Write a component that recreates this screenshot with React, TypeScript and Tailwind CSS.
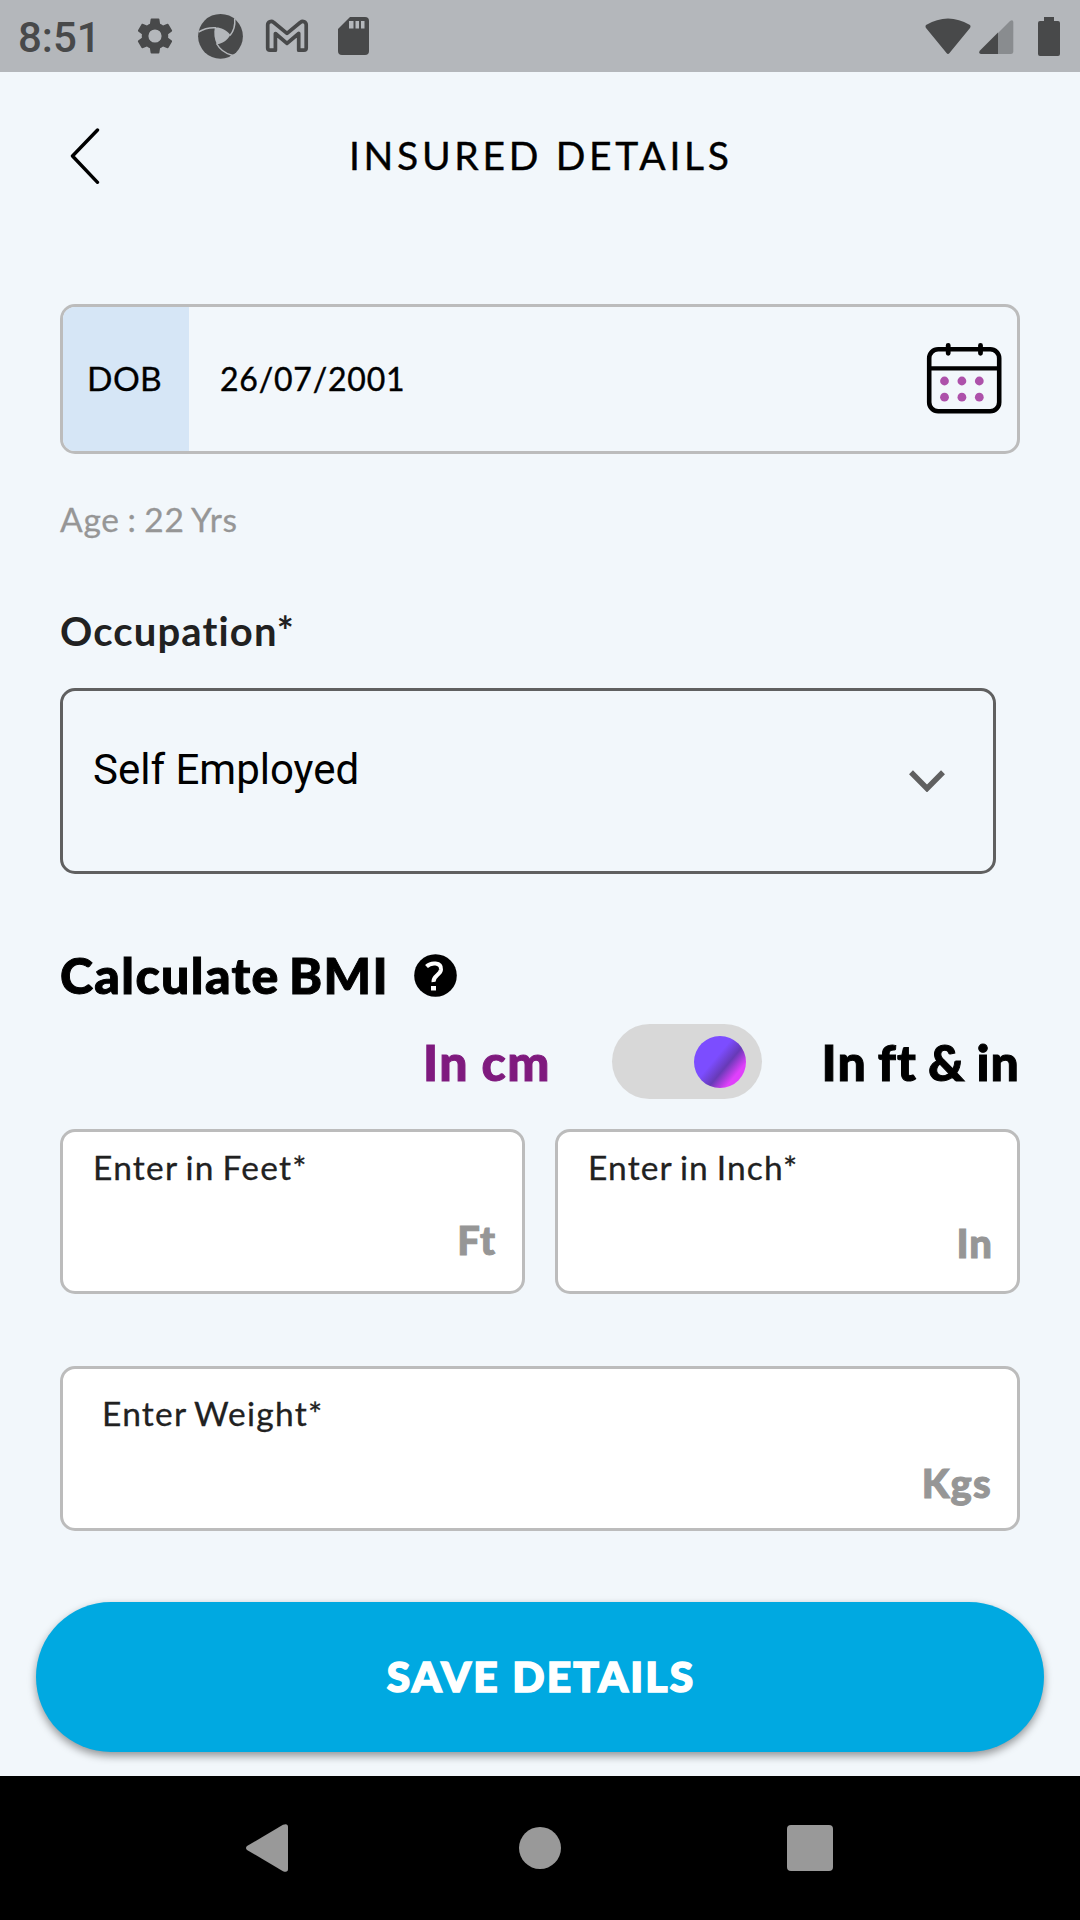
import React from "react";

function StatusBar() {
  return (
    <div className="flex h-[72px] items-center bg-[#b4b7bb] pl-[18px] pr-5 text-[#48494a]">
      <span className="mt-[3px] w-[120px] font-['Roboto',sans-serif] text-[42px] font-medium leading-[72px]">8:51</span>
      <svg className="-ml-[5px] h-[44px] w-[44px]" viewBox="0 0 24 24" fill="currentColor">
        <path d="M19.14 12.94c.04-.3.06-.61.06-.94 0-.32-.02-.64-.07-.94l2.03-1.58a.49.49 0 0 0 .12-.61l-1.92-3.32a.488.488 0 0 0-.59-.22l-2.39.96c-.5-.38-1.03-.7-1.62-.94l-.36-2.54a.484.484 0 0 0-.48-.41h-3.84c-.24 0-.43.17-.47.41l-.36 2.54c-.59.24-1.13.57-1.62.94l-2.39-.96c-.22-.08-.47 0-.59.22L2.74 8.87c-.12.21-.08.47.12.61l2.03 1.58c-.05.3-.09.63-.09.94s.02.64.07.94l-2.03 1.58a.49.49 0 0 0-.12.61l1.92 3.32c.12.22.37.29.59.22l2.39-.96c.5.38 1.03.7 1.62.94l.36 2.54c.05.24.24.41.48.41h3.84c.24 0 .44-.17.47-.41l.36-2.54c.59-.24 1.13-.56 1.62-.94l2.39.96c.22.08.47 0 .59-.22l1.92-3.32c.12-.22.07-.47-.12-.61l-2.01-1.58zM12 15.6A3.61 3.61 0 0 1 8.400 12 3.610 3.610 0 0 1 12 8.400 3.610 3.610 0 0 1 15.600 12 3.610 3.610 0 0 1 12 15.600z" />
      </svg>
      <svg className="ml-[20px] h-[46px] w-[46px]" viewBox="197 13 46 46" fill="none">
        <circle cx="220.500" cy="36.300" r="22.400" fill="currentColor" />
        <path d="M214.800 27.600C219 27 225.500 28.500 230.300 35C227 40.500 222.500 43.500 216.800 44.300C214.200 39 213.800 33 214.800 27.600Z" fill="#b4b7bb" />
        <path d="M198.500 32C204 28.500 209.500 27.300 216 27.700M230 35.500C233.800 31 235.300 25 234.700 18.500M216.500 43.500C219.500 49 224 53 232 55.300" stroke="#b4b7bb" strokeWidth="1.500" />
        <path d="M228.500 58L232 54.500L237 54L236 58Z" fill="#b4b7bb" />
      </svg>
      <svg className="ml-[22px] h-[34px] w-[44px]" viewBox="265 18 44 34" fill="none" stroke="currentColor" strokeWidth="3.700" strokeLinejoin="round">
        <path d="M267.700 24V47Q267.700 49.200 270 49.200H275.400V32.500L287 42.400L298.700 32.500V49.200H304Q306.200 49.200 306.200 47V24C306.200 20.500 302.500 19.500 300.500 21.300L287 32.400L273.500 21.300C271.500 19.500 267.700 20.500 267.700 24Z" />
      </svg>
      <svg className="ml-[29px] h-[38px] w-[31px]" viewBox="0 0 31 38">
        <path d="M12 0H27Q31 0 31 4V34Q31 38 27 38H4Q0 38 0 34V12Z" fill="currentColor" />
        <path d="M11 4H15.500V11.500H11ZM17.500 4H21V11.500H17.500ZM23 4H26.500V11.500H23Z" fill="#b4b7bb" />
      </svg>
      <svg className="ml-auto h-[37px] w-[46px]" viewBox="0 0 46 37">
        <path d="M1 7Q23-6 45 7Q46 8.500 45 10L24.500 35Q23 37 21.500 35L1 10Q0 8.500 1 7Z" fill="currentColor" />
      </svg>
      <svg className="ml-[8px] mt-[2px] h-[34px] w-[35px]" viewBox="0 0 35 34">
        <path d="M19 13L31 1Q34 -1 34.300 2V32Q34 34 32 34H19Z" fill="#898c8f" />
        <path d="M19 12.500V34H2Q-1 33.500 1 30.500Z" fill="currentColor" />
      </svg>
      <svg className="ml-[24px] h-[39px] w-[22px]" viewBox="0 0 22 39">
        <path d="M6 0H16V4H20Q22 4 22 6V37Q22 39 20 39H2Q0 39 0 37V6Q0 4 2 4H6Z" fill="currentColor" />
      </svg>
    </div>
  );
}

function CalendarIcon() {
  return (
    <svg className="mb-[2px] mr-[15px] h-[72px] w-[76px]" viewBox="926 342 76 72" fill="none">
      <rect x="929.200" y="349.300" width="70" height="62" rx="9" stroke="#000" strokeWidth="4.600" />
      <path d="M930 368.300H999" stroke="#000" strokeWidth="4.300" />
      <path d="M948.200 345.300V353.300M980.500 345.300V353.300" stroke="#000" strokeWidth="4.800" strokeLinecap="round" />
      <g fill="#ad51aa">
        <circle cx="944.500" cy="381" r="4.400" />
        <circle cx="961.900" cy="381" r="4.400" />
        <circle cx="979.300" cy="381" r="4.400" />
        <circle cx="944.500" cy="397.200" r="4.400" />
        <circle cx="961.900" cy="397.200" r="4.400" />
        <circle cx="979.300" cy="397.200" r="4.400" />
      </g>
    </svg>
  );
}

function NavBar() {
  return (
    <div className="flex h-[144px] items-center bg-black">
      <svg className="ml-[246px] h-[48px] w-[42px]" viewBox="0 0 42 48">
        <path d="M1 22L37 .8Q42-1 42 3V45Q42 49 37 47.200L1 26Q-1 24 1 22Z" fill="#999" />
      </svg>
      <div className="ml-[231px] h-[42px] w-[42px] rounded-full bg-[#999]" />
      <div className="ml-[226px] h-[46px] w-[46px] rounded-[4px] bg-[#999]" />
    </div>
  );
}

export default function App() {
  return (
    <div className="flex h-[1920px] w-[1080px] flex-col overflow-hidden bg-[#f2f7fb] font-['Lato',sans-serif] text-black">
      <StatusBar />
      <header className="flex h-[168px] items-center pl-[70px]">
        <svg className="h-[56px] w-[30px]" viewBox="0 0 30 56" fill="none">
          <path d="M27.500 2L2.500 28L27.500 54.300" stroke="#000" strokeWidth="3.400" strokeLinecap="round" strokeLinejoin="round" />
        </svg>
        <h1 className="mb-[2px] ml-[249px] whitespace-nowrap text-[39px] leading-[48px] tracking-[3.700px] [-webkit-text-stroke:0.400px_#000]">INSURED DETAILS</h1>
      </header>

      <main className="flex flex-1 flex-col px-[60px] pt-[64px]">
        <div className="flex h-[150px] shrink-0 items-center overflow-hidden rounded-[15px] border-[3px] border-[#bcbcbc]">
          <div className="flex h-full w-[126px] items-center bg-[#d6e6f6] pb-[2px] pl-[24px] text-[33.500px] tracking-[0.400px] [-webkit-text-stroke:0.300px_#000]">DOB</div>
          <span className="ml-[31px] flex-1 text-[32px] tracking-[0.800px] [-webkit-text-stroke:0.400px_#000]">26/07/2001</span>
          <CalendarIcon />
        </div>
        <p className="mt-[45px] h-[40px] text-[33.500px] leading-[40px] tracking-[0.700px] text-[#969696] [-webkit-text-stroke:0.300px_#969696] [word-spacing:-1.500px]">Age : 22 Yrs</p>

        <p className="mt-[67px] h-[50px] text-[40px] font-bold leading-[50px] tracking-[1.150px] text-[#212121]">Occupation*</p>
        <div className="mt-[32px] flex h-[186px] w-[936px] shrink-0 items-center rounded-[15px] border-[3px] border-[#606060]">
          <span className="-mt-[22px] ml-[30px] flex-1 font-['Roboto',sans-serif] text-[42px] leading-[50px]">Self Employed</span>
          <svg className="mr-[48px] h-[22px] w-[36px]" viewBox="0 0 36 22" fill="none">
            <path d="M2 2.200L18 18.500L34 2.200" stroke="#606060" strokeWidth="5.500" />
          </svg>
        </div>

        <div className="mt-[75px] flex h-[52px] items-center">
          <h2 className="w-[354px] whitespace-nowrap text-[50px] font-black leading-[52px] tracking-[1.400px] [-webkit-text-stroke:1px_#000] [word-spacing:-4px]">Calculate BMI</h2>
          <svg className="h-[43px] w-[43px]" viewBox="0 0 43 43" fill="none">
            <circle cx="21.500" cy="21.500" r="21.300" fill="#000" />
            <path d="M12.500 12.500C17 8 27.500 8 27 15.500C26.500 21 19 21.500 19.500 28" stroke="#fff" strokeWidth="4" />
            <path d="M17 32h5v4.500h-5z" fill="#fff" />
          </svg>
        </div>

        <div className="mt-[23px] flex h-[75px] items-center text-[50px] font-black leading-[60px]">
          <span className="ml-[363px] w-[189px] whitespace-nowrap tracking-[1.500px] text-[#7f1a7e] [-webkit-text-stroke:1px_#7f1a7e] [word-spacing:-1px]">In cm</span>
          <div className="flex h-[75px] w-[150px] items-center justify-end rounded-full bg-[#d8d8d8] pr-[16px]">
            <div className="h-[52px] w-[52px] rounded-full bg-[linear-gradient(130deg,#7c4dff_0%,#7c4dff_42%,#673ab7_60%,#e040fb_78%,#e040fb_100%)]" />
          </div>
          <span className="ml-[60px] whitespace-nowrap tracking-[1.100px] [-webkit-text-stroke:1px_#000] [word-spacing:-2px]">In ft &amp; in</span>
        </div>

        <div className="mt-[30px] grid grid-cols-2 gap-[30px]">
          <div className="flex h-[165px] flex-col rounded-[15px] border-[3px] border-[#bcbcbc] bg-white pl-[30px] pr-[26px] pt-[15px]">
            <span className="text-[33.500px] leading-[40px] tracking-[1.250px] text-[#212121] [-webkit-text-stroke:0.300px_#212121] [word-spacing:-2px]">Enter in Feet*</span>
            <span className="mt-[28px] text-right text-[40px] font-black leading-[50px] tracking-[1px] text-[#969696] [-webkit-text-stroke:1px_#969696]">Ft</span>
          </div>
          <div className="flex h-[165px] flex-col rounded-[15px] border-[3px] border-[#bcbcbc] bg-white pl-[30px] pr-[24px] pt-[15px]">
            <span className="text-[33.500px] leading-[40px] tracking-[1.150px] text-[#212121] [-webkit-text-stroke:0.300px_#212121] [word-spacing:-2px]">Enter in Inch*</span>
            <span className="mt-[31px] text-right text-[40px] font-black leading-[50px] tracking-[1px] text-[#969696] [-webkit-text-stroke:1px_#969696]">In</span>
          </div>
        </div>

        <div className="mt-[72px] flex h-[165px] flex-col rounded-[15px] border-[3px] border-[#bcbcbc] bg-white pl-[39px] pr-[25px] pt-[24px]">
          <span className="text-[33.500px] leading-[40px] tracking-[1.250px] text-[#212121] [-webkit-text-stroke:0.300px_#212121] [word-spacing:-2px]">Enter Weight*</span>
          <span className="mt-[25px] text-right text-[40px] font-black leading-[50px] tracking-[1.200px] text-[#969696] [-webkit-text-stroke:1px_#969696]">Kgs</span>
        </div>

        <button className="-mx-[24px] mt-[71px] h-[150px] shrink-0 rounded-full bg-[#00a9e1] pb-[3px] pl-[2px] text-[42.500px] font-black leading-[60px] tracking-[2.200px] text-white shadow-[0_4px_9px_rgba(0,0,0,0.400)] [-webkit-text-stroke:1.600px_#fff]">SAVE DETAILS</button>
      </main>
      <NavBar />
    </div>
  );
}
